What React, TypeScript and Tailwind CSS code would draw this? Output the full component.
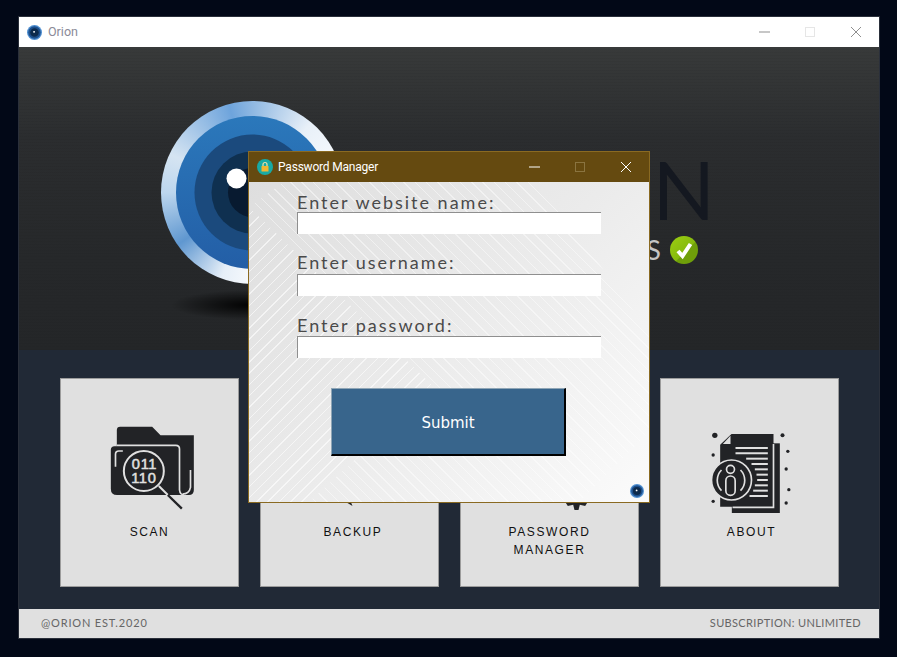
import { ReactNode } from "react";

function EyeMark({ size }: { size: number }) {
  return (
    <svg width={size} height={size} viewBox="0 0 14 14" className="shrink-0">
      <circle cx="7" cy="7" r="7" fill="#4f8fd0" />
      <circle cx="7" cy="7" r="5.8" fill="#1c4f8c" />
      <circle cx="7" cy="7" r="4" fill="#0c2a4c" />
      <circle cx="6.6" cy="6.4" r="0.9" fill="#ffffff" />
    </svg>
  );
}

function BigEye() {
  return (
    <div className="w-[183px] h-[183px] rounded-full flex items-center justify-center bg-[conic-gradient(from_0deg,#8fb8e2_0deg,#e8f0f8_40deg,#ffffff_90deg,#d8e6f3_130deg,#ffffff_170deg,#e6eff8_200deg,#5f97d0_235deg,#bcd6ee_270deg,#d5e4f2_295deg,#6ea4dc_345deg,#8fb8e2_360deg)]">
      <svg width="153" height="153" viewBox="0 0 153 153">
        <defs>
          <linearGradient id="ringBlue" x1="0" y1="0" x2="0" y2="1">
            <stop offset="0" stopColor="#2b78bb" />
            <stop offset="1" stopColor="#235ea6" />
          </linearGradient>
        </defs>
        <circle cx="76.5" cy="76.5" r="76.5" fill="url(#ringBlue)" />
        <circle cx="76.5" cy="76.5" r="58" fill="#1b4a7d" />
        <circle cx="76.5" cy="76.5" r="41" fill="#0f3050" />
        <circle cx="76.5" cy="76.5" r="24.5" fill="#081a30" />
        <circle cx="60.5" cy="62.5" r="10" fill="#ffffff" />
      </svg>
    </div>
  );
}

function ScanIcon() {
  const light = "#e0e0e0";
  const dark = "#222326";
  return (
    <svg width="90" height="90" viewBox="163.5 159 270 270">
      <path d="M199 180q0-10 10-10H305L330 196H430V360q0 15-15 15H199Z" fill={dark} />
      <path d="M181 240q0-11 11-11H376q11 0 11 11V375H200q-19 0-19-19Z" fill={dark} />
      <path d="M199 226H376q11 0 11 11V360q2 15 14 15" fill="none" stroke={light} strokeWidth="5" />
      <path d="M396 372q20 0 24-20V300" fill="none" stroke={light} strokeWidth="5" />
      <path d="M217 243H205q-10 0-10 10V290" fill="none" stroke={light} strokeWidth="5" />
      <line x1="325" y1="348" x2="352" y2="375" stroke={light} strokeWidth="6" />
      <line x1="352" y1="375" x2="394" y2="416" stroke={dark} strokeWidth="7" />
      <circle cx="280" cy="303" r="60" fill={dark} stroke={light} strokeWidth="6" />
      <text x="282" y="297" textAnchor="middle" letterSpacing="2" stroke={light} strokeWidth="1.500" fontFamily="Liberation Sans, sans-serif" fontSize="44" fill={light}>011</text>
      <text x="280" y="340" textAnchor="middle" letterSpacing="2" stroke={light} strokeWidth="1.500" fontFamily="Liberation Sans, sans-serif" fontSize="44" fill={light}>110</text>
    </svg>
  );
}

function BackupIcon() {
  return (
    <svg width="90" height="90" viewBox="163.5 159 270 270">
      <path d="M210 300a70 70 0 0 1 134-26a52 52 0 0 1 10 100H225a40 40 0 0 1-15-74Z" fill="#222326" />
      <path d="M291 372L306 408L291 399Z" fill="#222326" />
    </svg>
  );
}

function KeyIcon() {
  return (
    <svg width="90" height="90" viewBox="163.5 159 270 270">
      <rect x="230" y="190" width="130" height="150" rx="16" fill="#222326" />
      <circle cx="378" cy="365" r="34" fill="#222326" />
      <path d="M342 392L352 408L368 404L372 420H384L388 404L404 408L414 392Z" fill="#222326" />
    </svg>
  );
}

function AboutIcon() {
  const light = "#e0e0e0";
  const dark = "#222326";
  const rows = [
    [255, 234],
    [255, 250],
    [287, 266],
    [303, 282],
    [313, 298],
    [318, 314],
    [320, 330],
    [313, 346],
    [308, 362],
    [297, 378],
  ];
  const dots = [
    [193, 196, 8],
    [188, 255, 5],
    [188, 394, 5],
    [396, 196, 6],
    [412, 244, 5],
    [407, 297, 5],
    [415, 359, 5],
    [407, 399, 5],
  ];
  return (
    <svg width="90" height="90" viewBox="163.5 159 270 270">
      <rect x="244" y="220" width="144" height="210" fill={dark} />
      <path d="M243 192H369V410H209V224Z" fill={dark} />
      <path d="M369 222V412H246" fill="none" stroke={light} strokeWidth="5" />
      <path d="M217 222H240V197Z" fill={light} />
      {rows.map(([x, y]) => (
        <line key={y} x1={x} y1={y} x2="352" y2={y} stroke={light} strokeWidth="6" />
      ))}
      <circle cx="243" cy="330" r="60" fill={dark} stroke={light} strokeWidth="5" />
      <circle cx="240" cy="298" r="12" fill="none" stroke={light} strokeWidth="5" />
      <rect x="226" y="318" width="28" height="58" rx="14" fill="none" stroke={light} strokeWidth="5" />
      <path d="M213 300a44 44 0 0 0 0 62M270 300a44 44 0 0 1 0 62" fill="none" stroke={light} strokeWidth="5" />
      {dots.map(([cx, cy, r]) => (
        <circle key={cx + "-" + cy} cx={cx} cy={cy} r={r} fill={dark} />
      ))}
    </svg>
  );
}

function Card({ icon, label, labelClass = "" }: { icon: ReactNode; label: string[]; labelClass?: string }) {
  return (
    <div className="w-[179px] h-[209px] bg-[#e0e0e0] border border-[#9c9c9c] flex flex-col items-center pt-[44px]">
      {icon}
      <div className={"mt-[10px] text-center text-[12px] leading-[18px] tracking-[1.6px] text-[#111111] font-['Liberation_Sans',sans-serif] " + labelClass}>
        {label.map((line) => (
          <div key={line}>{line}</div>
        ))}
      </div>
    </div>
  );
}

function Field({ label, leading }: { label: string; leading: string }) {
  return (
    <div className="mb-[12px]">
      <div className={"h-[28px] text-[18px] tracking-[2px] text-[#4a4a4a] font-['Lato',sans-serif] " + leading}>{label}</div>
      <input className="block w-[304px] h-[22px] bg-white border-t border-l border-[#8f8f8f] outline-none" />
    </div>
  );
}

function WinButtons({ color, maxColor }: { color: string; maxColor: string }) {
  return (
    <svg width="102" height="12" viewBox="0 0 102 12">
      <line x1="0" y1="6" x2="11" y2="6" stroke={color} strokeWidth="1" />
      <rect x="46.5" y="1.5" width="9" height="9" fill="none" stroke={maxColor} strokeWidth="1" />
      <path d="M92 1L102 11M102 1L92 11" stroke={color} strokeWidth="1" fill="none" />
    </svg>
  );
}

export default function App() {
  return (
    <div className="relative w-[897px] h-[657px] bg-[#020817] pt-[16px] pl-[18px] overflow-hidden">
      <div className="w-[862px] h-[623px] border border-[#2a2f3a] flex flex-col">
        <div className="h-[30px] bg-white flex items-center pl-[8px] pr-[18px]">
          <EyeMark size={15} />
          <span className="ml-[6px] text-[12.500px] text-[#8a8a98] font-['Roboto',sans-serif]">Orion</span>
          <div className="ml-auto flex">
            <WinButtons color="#8f8f8f" maxColor="#e6e6e6" />
          </div>
        </div>

        <div className="h-[303px] flex pl-[142px] pt-[54px] bg-[repeating-linear-gradient(0deg,rgba(0,0,0,0.035)_0,rgba(0,0,0,0.035)_1px,transparent_1px,transparent_3px),linear-gradient(180deg,#383a3a_0%,#2b2d2f_30%,#26282a_70%,#242628_100%)]">
          <div className="relative">
            <BigEye />
            <div className="absolute left-[10px] top-[189px] w-[160px] h-[30px] bg-[radial-gradient(closest-side,rgba(0,0,0,0.95),transparent)]" />
          </div>
          <div className="w-[371px] flex flex-col items-end pt-[46px]">
            <div className="h-[82px] text-[82px] leading-[82px] text-[#141820] font-['Lato',sans-serif] whitespace-nowrap">ORION</div>
            <div className="flex items-center mt-[6px] pr-[17px]">
              <span className="text-[27px] leading-[30px] text-[#c4c4c4] font-['Lato',sans-serif] whitespace-nowrap">NO THREATS</span>
              <svg width="28" height="28" viewBox="0 0 28 28" className="ml-[9px]">
                <defs>
                  <linearGradient id="okGreen" x1="0" y1="0" x2="1" y2="1">
                    <stop offset="0" stopColor="#9ccf12" />
                    <stop offset="0.55" stopColor="#86ba0e" />
                    <stop offset="0.56" stopColor="#6f9f0a" />
                    <stop offset="1" stopColor="#6f9f0a" />
                  </linearGradient>
                </defs>
                <circle cx="14" cy="14" r="14" fill="url(#okGreen)" />
                <path d="M8 15l4.500 5L20.500 8" fill="none" stroke="#ffffff" strokeWidth="4" />
              </svg>
            </div>
          </div>
        </div>

        <div className="h-[259px] bg-[#212936] flex gap-[21px] pl-[41px] pt-[28px]">
          <Card icon={<ScanIcon />} label={["SCAN"]} />
          <Card icon={<BackupIcon />} label={["BACKUP"]} labelClass="ml-[7px]" />
          <Card icon={<KeyIcon />} label={["PASSWORD", "MANAGER"]} />
          <Card icon={<AboutIcon />} label={["ABOUT"]} labelClass="ml-[4px]" />
        </div>

        <div className="h-[29px] bg-[#e0e0e0] flex items-center justify-between pl-[22px] pr-[18px] text-[11px] text-[#666666] font-['Lato',sans-serif]">
          <span className="tracking-[0.830px]">@ORION EST.2020</span>
          <span className="tracking-[0.350px]">SUBSCRIPTION: UNLIMITED</span>
        </div>
      </div>

      <div className="absolute left-[248px] top-[151px] w-[402px] h-[352px] border border-[#8a6a22] flex flex-col">
        <div className="h-[30px] shrink-0 bg-[#654a10] flex items-center pl-[8px] pr-[18px]">
          <svg width="16" height="16" viewBox="0 0 16 16">
            <circle cx="8" cy="8" r="8" fill="#18aaa4" />
            <rect x="4.500" y="7" width="7" height="5.500" rx="0.500" fill="#f2b632" />
            <path d="M6 7V5.500a2 2 0 0 1 4 0V7" fill="none" stroke="#f2e2a8" strokeWidth="1.200" />
          </svg>
          <span className="ml-[5px] text-[12px] tracking-[-0.2px] text-white font-['Roboto',sans-serif]">Password Manager</span>
          <div className="ml-auto flex">
            <WinButtons color="#ffffff" maxColor="#8a7440" />
          </div>
        </div>
        <div className="relative flex-1 pl-[48px] pt-[2px] bg-[linear-gradient(135deg,#dedede_0%,#ebebeb_50%,#fbfbfb_100%)]">
          <div className="absolute inset-0 bg-[repeating-linear-gradient(135deg,transparent_0,transparent_7px,rgba(255,255,255,0.6)_7px,rgba(255,255,255,0.6)_8px)] [clip-path:polygon(0_25px,185px_205px,60px_320px,0_320px)]" />
          <div className="absolute inset-0 bg-[repeating-linear-gradient(45deg,transparent_0,transparent_7px,rgba(255,255,255,0.45)_7px,rgba(255,255,255,0.45)_8px)] [clip-path:polygon(35px_0,290px_0,400px_150px,400px_250px,330px_320px,60px_320px,185px_205px,0_25px)]" />
          <div className="relative">
            <Field label="Enter website name:" leading="leading-[37px]" />
            <Field label="Enter username:" leading="leading-[32px]" />
            <Field label="Enter password:" leading="leading-[34px]" />
            <button className="mt-[18px] ml-[34px] w-[235px] h-[68px] pt-[3px] bg-[#38658c] border-t border-l border-t-[#8fa5b5] border-l-[#8fa5b5] border-r-2 border-b-2 border-r-black border-b-black text-white text-[15px] font-['DejaVu_Sans',sans-serif]">
              Submit
            </button>
          </div>
          <div className="absolute right-[5px] bottom-[4px]">
            <EyeMark size={14} />
          </div>
        </div>
      </div>
    </div>
  );
}
